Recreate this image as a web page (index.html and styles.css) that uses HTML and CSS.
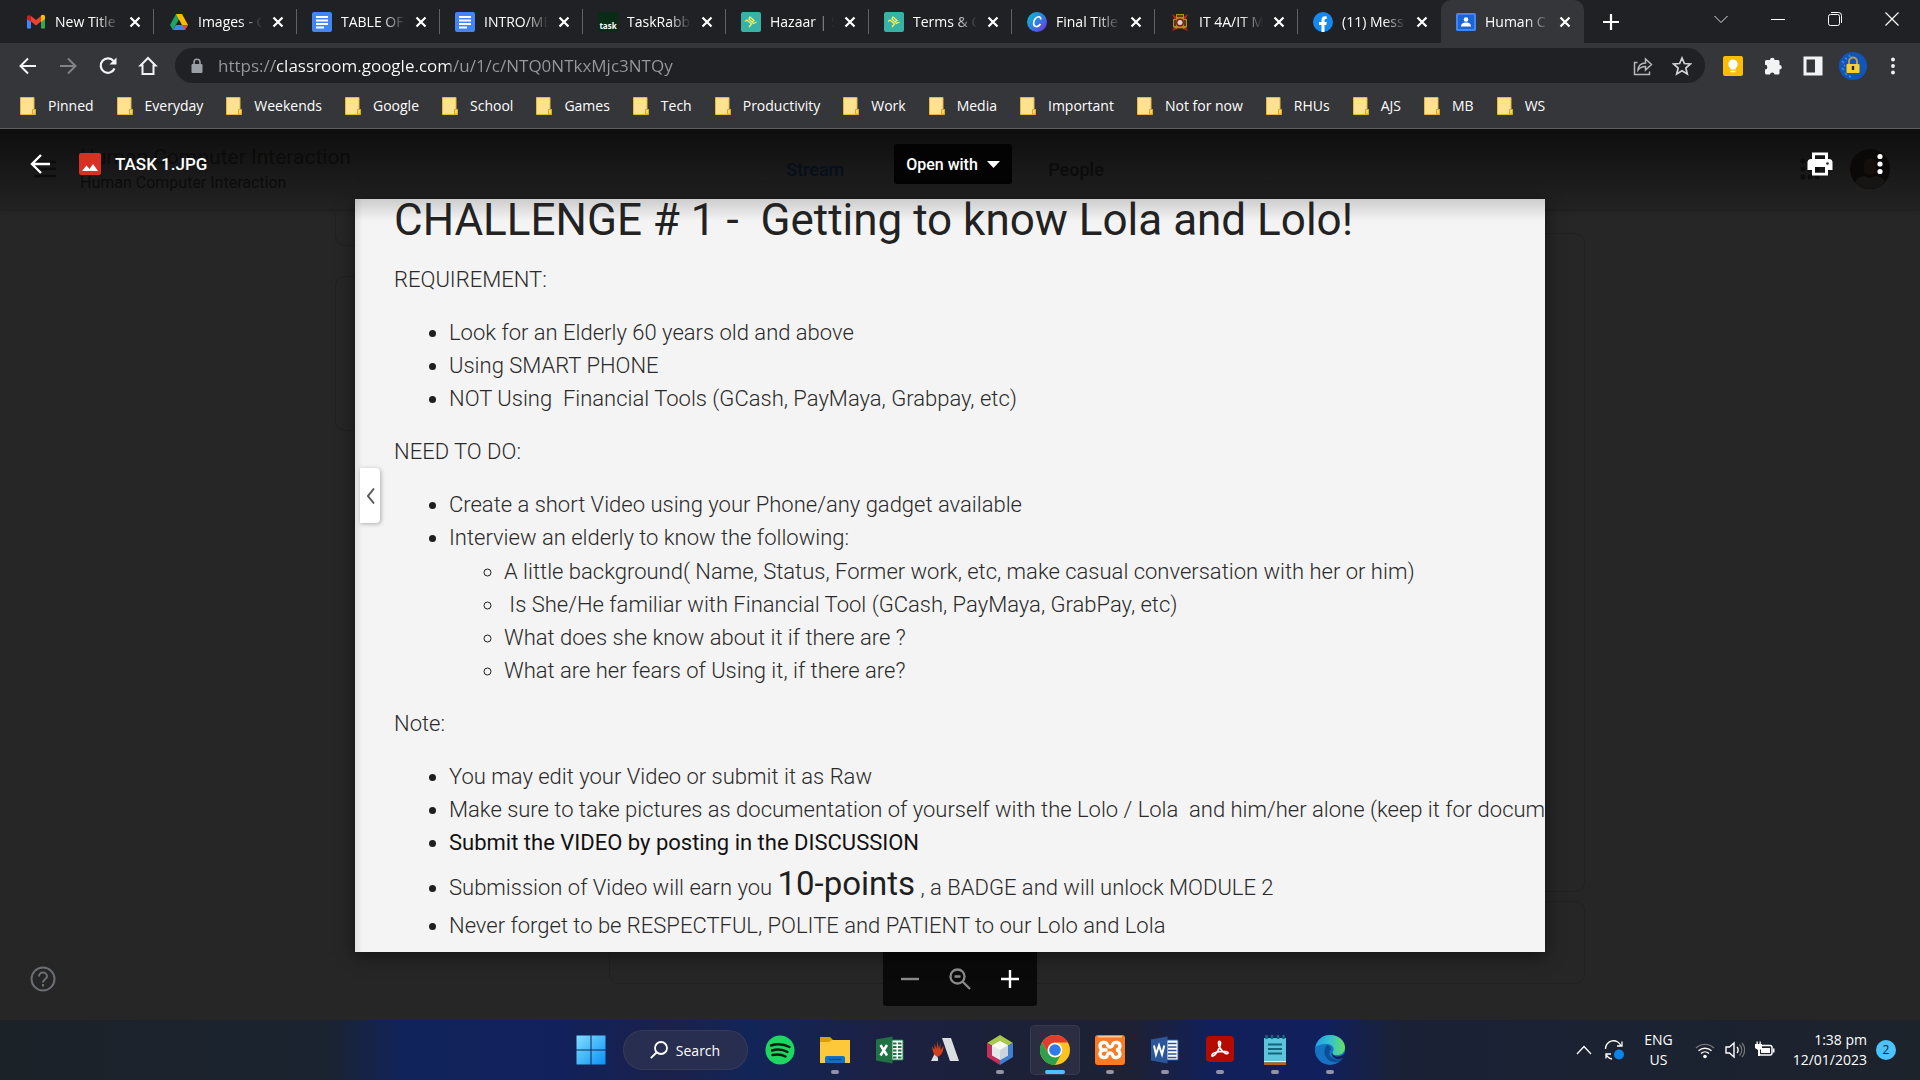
FILE: index.html
```html
<!DOCTYPE html>
<html lang="en">
<head>
<meta charset="utf-8">
<title>Human Computer Interaction</title>
<link rel="stylesheet" href="styles.css">
</head>
<body>
<svg class="sprite" aria-hidden="true">
  <symbol id="close" viewBox="0 0 12 12"><path d="M1.5 1.5l9 9M10.500 1.500l-9 9" stroke="#fff" stroke-width="2.200"/></symbol>
  <symbol id="folder" viewBox="0 0 16 18"><path d="M.5.5h13.500v12h1.500v5H.5z" fill="#ffe290" stroke="#e3b93b"/><path d="M12.500 17v-4.500h3V17z" fill="#fbd765" stroke="#d9a92e"/></symbol>
  <symbol id="docs" viewBox="0 0 20 20"><rect width="20" height="20" rx="2" fill="#4285f4"/><path d="M4 5h12M4 8.500h12M4 12h12M4 15.500h8" stroke="#fff" stroke-width="2"/></symbol>
  <symbol id="hazaar" viewBox="0 0 20 20"><rect width="20" height="20" rx="2" fill="#38b2a5"/><path d="M4 9.500l2-1.500 4.500 4-2.500 3M9 4.500L8 7l4.500 4.500 3-1.500M9 5l4 3.500-2 1.500" fill="none" stroke="#f5f060" stroke-width="1.300"/></symbol>
</svg>

<header class="browser">
  <div class="tabstrip">
    <div class="tabs">
      <div class="tab"><svg class="favicon" viewBox="0 0 20 20"><path d="M1 4v12.500h4V9z" fill="#4285f4"/><path d="M19 4v12.500h-4V9z" fill="#34a853"/><path d="M15 5v5l4-3V5c0-2-2-3-4-1.500z" fill="#fbbc04"/><path d="M5 9.500V4L10 8l5-4v5.500L10 13.500z" fill="#ea4335"/><path d="M1 7l4 3V4C3 2.500 1 3 1 5z" fill="#c5221f"/></svg><a href="#" class="tab-title">New Title</a><button class="tab-close" aria-label="Close tab"><svg><use href="#close"/></svg></button></div>
      <div class="tab"><svg class="favicon" viewBox="0 0 20 20"><path d="M7 2h6L4 18 1 13z" fill="#1ea362"/><path d="M7 2h6l6 11h-6z" fill="#ffba00"/><path d="M7 13h12l-3 5H4z" fill="#4285f4"/><path d="M13 13h6l-3 5z" fill="#ea4335"/></svg><a href="#" class="tab-title">Images - G</a><button class="tab-close" aria-label="Close tab"><svg><use href="#close"/></svg></button></div>
      <div class="tab"><svg class="favicon"><use href="#docs"/></svg><a href="#" class="tab-title">TABLE OF</a><button class="tab-close" aria-label="Close tab"><svg><use href="#close"/></svg></button></div>
      <div class="tab"><svg class="favicon"><use href="#docs"/></svg><a href="#" class="tab-title">INTRO/ME</a><button class="tab-close" aria-label="Close tab"><svg><use href="#close"/></svg></button></div>
      <div class="tab"><span class="favicon task">task</span><a href="#" class="tab-title">TaskRabbit</a><button class="tab-close" aria-label="Close tab"><svg><use href="#close"/></svg></button></div>
      <div class="tab"><svg class="favicon"><use href="#hazaar"/></svg><a href="#" class="tab-title">Hazaar | S</a><button class="tab-close" aria-label="Close tab"><svg><use href="#close"/></svg></button></div>
      <div class="tab"><svg class="favicon"><use href="#hazaar"/></svg><a href="#" class="tab-title">Terms &amp; C</a><button class="tab-close" aria-label="Close tab"><svg><use href="#close"/></svg></button></div>
      <div class="tab"><svg class="favicon" viewBox="0 0 20 20"><defs><linearGradient id="cv" x1="0" y1="0" x2="1" y2="1"><stop offset="0" stop-color="#00c4cc"/><stop offset=".5" stop-color="#2f7fe0"/><stop offset="1" stop-color="#7d2ae8"/></linearGradient></defs><circle cx="10" cy="10" r="10" fill="url(#cv)"/><path d="M13.500 7.500c1-3-3-4-5.500-.5-2 3-2 7 1 7.500 2 .3 3.500-1 4.500-2.500" fill="none" stroke="#fff" stroke-width="1.700"/></svg><a href="#" class="tab-title">Final Title</a><button class="tab-close" aria-label="Close tab"><svg><use href="#close"/></svg></button></div>
      <div class="tab"><svg class="favicon" viewBox="0 0 20 20"><path d="M2 2l5 3h6l5-3-2 5v8l2 4-5-2H7l-5 2 2-4V7z" fill="#b3261e"/><path d="M6 2h8v5h3v8l-4 2H7l-4-2V7h3z" fill="#b98a1e"/><path d="M5 8v6M15 8v6M7 4h6M7 17h6" stroke="#35240c" stroke-width="1.500"/><circle cx="10" cy="10.500" r="4" fill="#7c1d18"/><circle cx="10" cy="10.500" r="2.500" fill="#d9d3cf"/></svg><a href="#" class="tab-title">IT 4A/IT M</a><button class="tab-close" aria-label="Close tab"><svg><use href="#close"/></svg></button></div>
      <div class="tab last"><svg class="favicon" viewBox="0 0 20 20"><circle cx="10" cy="10" r="10" fill="#1489f0"/><path d="M8.500 20v-7H6v-3h2.500V8c0-3 1.700-4 5.200-3.600V7C12 7 11.500 7 11.500 8.500V10h2.300l-.5 3h-1.800v7z" fill="#fff"/></svg><a href="#" class="tab-title">(11) Mess</a><button class="tab-close" aria-label="Close tab"><svg><use href="#close"/></svg></button></div>
      <div class="tab active"><svg class="favicon" viewBox="0 0 20 20"><rect y="1" width="20" height="18" rx="1.500" fill="#4285f4"/><rect x="2" y="3" width="16" height="14" fill="#1a66d6"/><circle cx="10" cy="7.500" r="2.300" fill="#fff"/><path d="M5 14.500c0-3.500 3-4 5-4s5 .5 5 4z" fill="#fff"/></svg><a href="#" class="tab-title">Human C</a><button class="tab-close" aria-label="Close tab"><svg><use href="#close"/></svg></button></div>
    </div>
    <button class="new-tab" aria-label="New tab"><svg width="16" height="16" viewBox="0 0 16 16"><path d="M8 0v16M0 8h16" stroke="#fff" stroke-width="2.200"/></svg></button>
    <div class="window-controls">
      <button aria-label="Search tabs"><svg width="14" height="14" viewBox="0 0 14 14"><path d="M.5 4L7 10.500 13.500 4" fill="none" stroke="#ddd"/></svg></button>
      <button aria-label="Minimize"><svg width="14" height="14" viewBox="0 0 14 14"><path d="M0 7.500h14" stroke="#fff"/></svg></button>
      <button aria-label="Restore"><svg width="14" height="14" viewBox="0 0 14 14"><rect x=".5" y="2.500" width="11" height="11" rx="2" fill="none" stroke="#fff"/><path d="M3 .5h7.500a3 3 0 013 3V11" fill="none" stroke="#fff"/></svg></button>
      <button aria-label="Close"><svg width="14" height="14" viewBox="0 0 14 14"><path d="M.5.5l13 13M13.500.5l-13 13" stroke="#fff" stroke-width="1.200"/></svg></button>
    </div>
  </div>

  <div class="toolbar">
    <div class="nav">
      <button aria-label="Back"><svg viewBox="0 0 20 20"><path d="M18 10H3M10 2.500L2.500 10l7.500 7.500" fill="none" stroke="#f1f3f4" stroke-width="2"/></svg></button>
      <button aria-label="Forward"><svg viewBox="0 0 20 20"><path d="M2 10h15M10 2.500l7.500 7.500-7.500 7.500" fill="none" stroke="#818387" stroke-width="2"/></svg></button>
      <button aria-label="Reload"><svg viewBox="0 0 20 20"><path d="M16.500 12.500A7.200 7.200 0 1115.500 5" fill="none" stroke="#f1f3f4" stroke-width="2.200"/><path d="M18.500 1.500v7h-7z" fill="#f1f3f4"/></svg></button>
      <button aria-label="Home"><svg viewBox="0 0 20 20"><path d="M4.500 18V9.500h-2L10 2l7.500 7.500h-2V18z" fill="none" stroke="#f1f3f4" stroke-width="2"/></svg></button>
    </div>
    <div class="omnibox">
      <svg class="lock" viewBox="0 0 12 16"><path d="M3 7V4.200a3 3 0 016 0V7" fill="none" stroke="#9aa0a6" stroke-width="1.600"/><rect x=".5" y="6" width="11" height="9" rx="1.200" fill="#9aa0a6"/></svg>
      <input class="url" type="text" aria-label="Address" value="https://classroom.google.com/u/1/c/NTQ0NTkxMjc3NTQy">
      <button aria-label="Share"><svg viewBox="0 0 20 20"><path d="M4.500 6.500H1.500v12h15v-3" fill="none" stroke="#b5b7ba" stroke-width="1.500"/><path d="M5 14c.5-5 3.500-7 7.500-7V3l6 5.500-6 5.500v-3.500c-3.500 0-5.500 1-7.500 3.500z" fill="none" stroke="#b5b7ba" stroke-width="1.500"/></svg></button>
      <button aria-label="Bookmark this tab"><svg viewBox="0 0 20 20"><path d="M10 2l2.400 5.500 6 .5-4.600 4 1.500 6L10 14.700 4.700 18l1.500-6-4.600-4 6-.5z" fill="none" stroke="#d0d2d5" stroke-width="1.700"/></svg></button>
    </div>
    <div class="extensions">
      <button aria-label="Google Keep"><svg viewBox="0 0 20 20"><rect width="20" height="20" rx="2" fill="#fbbc04"/><path d="M10 3.500a4.700 4.700 0 00-2.700 8.500v1.500h5.400V12A4.700 4.700 0 0010 3.500zM7.500 14.700h5v1.500h-5z" fill="#fff"/></svg></button>
      <button aria-label="Extensions"><svg viewBox="0 0 20 20"><path d="M7 4a2.300 2.300 0 014.600 0H15a1.500 1.500 0 011.500 1.500V9a2.300 2.300 0 010 4.600V17a1.500 1.500 0 01-1.500 1.500h-3.400a2.400 2.400 0 00-4.700 0H3.500A1.500 1.500 0 012 17v-3.500a2.300 2.300 0 000-4.700V5.500A1.500 1.500 0 013.500 4z" fill="#f1f3f4"/></svg></button>
      <button aria-label="Side panel"><svg viewBox="0 0 20 20"><rect x="2" y="2" width="16" height="16" fill="none" stroke="#f1f3f4" stroke-width="3"/><path d="M12 2h7v16h-7z" fill="#f1f3f4"/></svg></button>
      <button aria-label="Profile"><svg class="profile" viewBox="0 0 28 28"><circle cx="14" cy="14" r="14" fill="#1255b8"/><path d="M3 9l2 2M6 6l2 1M3 16l2 2M6 21l2 2M10 3l1 2M5 13l1 1M10 24l2 1" stroke="#3d8ae8" stroke-width="1.500"/><path d="M10 13V9.500a4 4 0 018 0V13" fill="none" stroke="#b99b4a" stroke-width="2"/><rect x="7.500" y="12" width="13" height="9" rx="1" fill="#f8cf2e"/><path d="M14 14v4" stroke="#1d2a44" stroke-width="2.400"/></svg></button>
      <button aria-label="Menu"><svg viewBox="0 0 20 20"><g fill="#f1f3f4"><circle cx="10" cy="3.500" r="1.900"/><circle cx="10" cy="10" r="1.900"/><circle cx="10" cy="16.500" r="1.900"/></g></svg></button>
    </div>
  </div>

  <nav class="bookmarks" aria-label="Bookmarks">
    <a href="#"><svg><use href="#folder"/></svg>Pinned</a>
    <a href="#"><svg><use href="#folder"/></svg>Everyday</a>
    <a href="#"><svg><use href="#folder"/></svg>Weekends</a>
    <a href="#"><svg><use href="#folder"/></svg>Google</a>
    <a href="#"><svg><use href="#folder"/></svg>School</a>
    <a href="#"><svg><use href="#folder"/></svg>Games</a>
    <a href="#"><svg><use href="#folder"/></svg>Tech</a>
    <a href="#"><svg><use href="#folder"/></svg>Productivity</a>
    <a href="#"><svg><use href="#folder"/></svg>Work</a>
    <a href="#"><svg><use href="#folder"/></svg>Media</a>
    <a href="#"><svg><use href="#folder"/></svg>Important</a>
    <a href="#"><svg><use href="#folder"/></svg>Not for now</a>
    <a href="#"><svg><use href="#folder"/></svg>RHUs</a>
    <a href="#"><svg><use href="#folder"/></svg>AJS</a>
    <a href="#"><svg><use href="#folder"/></svg>MB</a>
    <a href="#"><svg><use href="#folder"/></svg>WS</a>
  </nav>
</header>

<div class="stage">
  <div class="classroom" aria-hidden="true">
    <div class="class-header">
      <div class="class-brand">
        <svg class="hamburger" viewBox="0 0 22 18"><path d="M0 2h22M0 9h22M0 16h22" stroke="#0c0c0c" stroke-width="2.500"/></svg>
        <div class="class-name"><strong>Human Computer Interaction</strong><span>Human Computer Interaction</span></div>
      </div>
      <div class="class-nav"><span class="current">Stream</span><span>Classwork</span><span>People</span></div>
      <div class="class-tools">
        <svg width="20" height="24" viewBox="0 0 20 24"><g fill="#0c0c0c"><circle cx="3" cy="4" r="2.500"/><circle cx="10" cy="4" r="2.500"/><circle cx="17" cy="4" r="2.500"/><circle cx="3" cy="12" r="2.500"/><circle cx="10" cy="12" r="2.500"/><circle cx="17" cy="12" r="2.500"/><circle cx="3" cy="20" r="2.500"/><circle cx="10" cy="20" r="2.500"/><circle cx="17" cy="20" r="2.500"/></g></svg>
        <svg width="40" height="40" viewBox="0 0 40 40"><circle cx="20" cy="20" r="20" fill="#0b0908"/><path d="M14 14c0-6 12-6 12 0v8c0 5-12 5-12 0z" fill="#150f0c"/><path d="M5 33c4-6 8-7 15-4 7-3 11-2 15 4a20 20 0 01-30 0z" fill="#171514"/></svg>
      </div>
    </div>
    <div class="class-body">
      <div class="side"><div class="card code"></div><div class="card upcoming"></div></div>
      <div class="feed"><div class="card post"></div><div class="card comment"></div></div>
    </div>
  </div>

  <div class="viewer">
    <div class="viewer-bar">
      <div class="file">
        <button aria-label="Close viewer"><svg width="20" height="20" viewBox="0 0 20 20"><path d="M20 10H2M11 1l-9 9 9 9" fill="none" stroke="#fff" stroke-width="2.400"/></svg></button>
        <svg width="22" height="22" viewBox="0 0 22 22"><rect width="22" height="22" rx="2" fill="#d93025"/><path d="M3 18l4.500-5.500 3 3.500 3.500-5 5 7z" fill="#fff"/></svg>
        <span class="file-name">TASK 1.JPG</span>
      </div>
      <button class="open-with">Open with<svg width="13" height="7" viewBox="0 0 13 7"><path d="M0 0h13L6.500 7z" fill="#fff"/></svg></button>
      <div class="actions">
        <button aria-label="Print"><svg width="26" height="24" viewBox="0 0 26 24"><path d="M5 .5h16V7h1a3.500 3.500 0 013.500 3.500V18H21v5.500H5V18H.5v-7.500A3.500 3.500 0 014 7h1zm3 2.700V7h10V3.200zM8 15v5.700h10V15z" fill="#fff" fill-rule="evenodd"/><circle cx="20.500" cy="11.500" r="1.300" fill="#222"/></svg></button>
        <button aria-label="More actions"><svg width="6" height="22" viewBox="0 0 6 22"><g fill="#fff"><circle cx="3" cy="3.500" r="2.600"/><circle cx="3" cy="11" r="2.600"/><circle cx="3" cy="18.500" r="2.600"/></g></svg></button>
      </div>
    </div>

    <main class="sheet-area">
      <article class="sheet">
        <button class="expander" aria-label="Collapse panel"><svg width="9" height="18" viewBox="0 0 9 18"><path d="M8 1.500L2 9l6 7.500" fill="none" stroke="#555" stroke-width="2"/></svg></button>
        <h1>CHALLENGE # 1 -&nbsp; Getting to know Lola and Lolo!</h1>
        <p>REQUIREMENT:</p>
        <ul>
          <li>Look for an Elderly 60 years old and above</li>
          <li>Using SMART PHONE</li>
          <li>NOT Using&nbsp; Financial Tools (GCash, PayMaya, Grabpay, etc)</li>
        </ul>
        <p>NEED TO DO:</p>
        <ul>
          <li>Create a short Video using your Phone/any gadget available</li>
          <li>Interview an elderly to know the following:
            <ul>
              <li>A little background( Name, Status, Former work, etc, make casual conversation with her or him)</li>
              <li>&nbsp;Is She/He familiar with Financial Tool (GCash, PayMaya, GrabPay, etc)</li>
              <li>What does she know about it if there are ?</li>
              <li>What are her fears of Using it, if there are?</li>
            </ul>
          </li>
        </ul>
        <p>Note:</p>
        <ul>
          <li>You may edit your Video or submit it as Raw</li>
          <li>Make sure to take pictures as documentation of yourself with the Lolo / Lola&nbsp; and him/her alone (keep it for documentation)</li>
          <li><strong>Submit the VIDEO by posting in the DISCUSSION</strong></li>
          <li>Submission of Video will earn you <span class="points">10-points</span> , a BADGE and will unlock MODULE 2</li>
          <li>Never forget to be RESPECTFUL, POLITE and PATIENT to our Lolo and Lola</li>
        </ul>
      </article>
    </main>

    <div class="viewer-foot">
      <button class="help" aria-label="Help"><svg width="26" height="26" viewBox="0 0 26 26"><circle cx="13" cy="13" r="11.500" fill="none" stroke="#6b6f74" stroke-width="2"/><path d="M9 10.500a4 4 0 118 0c0 2.500-4 3-4 6M13 18v2.400" fill="none" stroke="#6b6f74" stroke-width="2"/></svg></button>
      <div class="zoom">
        <button aria-label="Zoom out"><svg width="18" height="18" viewBox="0 0 18 18"><path d="M0 9h18" stroke="#8a8a8a" stroke-width="2.400"/></svg></button>
        <button aria-label="Fit to width"><svg width="22" height="22" viewBox="0 0 22 22"><circle cx="8.500" cy="8.500" r="7" fill="none" stroke="#8a8a8a" stroke-width="2.300"/><path d="M5.500 8.500h6M13.500 13.500l7.500 7.500" stroke="#8a8a8a" stroke-width="2.300"/></svg></button>
        <button aria-label="Zoom in"><svg width="18" height="18" viewBox="0 0 18 18"><path d="M0 9h18M9 0v18" stroke="#fff" stroke-width="2.400"/></svg></button>
      </div>
    </div>
  </div>
</div>

<footer class="taskbar">
  <div class="dock">
    <button class="app" aria-label="Start"><svg viewBox="0 0 30 30"><defs><linearGradient id="win" x1="0" y1="0" x2="1" y2="1"><stop offset="0" stop-color="#7fe0ff"/><stop offset="1" stop-color="#0a90f5"/></linearGradient></defs><path d="M.5.500h14v14H.5zM15.500.500h14v14h-14zM.5 15.500h14v14H.5zM15.500 15.500h14v14h-14z" fill="url(#win)"/></svg></button>
    <button class="search"><svg width="18" height="18" viewBox="0 0 18 18"><circle cx="11" cy="7" r="6" fill="none" stroke="#fff" stroke-width="1.800"/><path d="M6.500 11.500L.8 17.200" stroke="#fff" stroke-width="1.800"/></svg>Search</button>
    <button class="app" aria-label="Spotify"><svg viewBox="0 0 30 30"><circle cx="15" cy="15" r="14.500" fill="#1ed760"/><path d="M6 10.500c6-2 13-1.500 18.500 1.500M7 15.500c5-1.500 11-1 15.500 1.500M7.500 20c4.500-1 9-.7 13 1.500" fill="none" stroke="#0c1a10" stroke-width="2.400" stroke-linecap="round"/></svg></button>
    <button class="app open" aria-label="File Explorer"><svg viewBox="0 0 30 30"><path d="M0 2h10l3 3v5H0z" fill="#e09d0a"/><path d="M0 7h9l3-2h18v23H0z" fill="#fdc93a"/><path d="M5 28v-5a2 2 0 012-2h16a2 2 0 012 2v5z" fill="#1071c6"/><path d="M9 24.500h12" stroke="#0a4d90" stroke-width="1.500"/></svg></button>
    <button class="app" aria-label="Excel"><svg viewBox="0 0 30 30"><path d="M15 5h13v20H15z" fill="#fff" stroke="#217346"/><path d="M18 8.500h3.500M18 12h3.500M18 15.500h3.500M18 19h3.500M18 22.500h3.500M23 8.500h3.500M23 12h3.500M23 15.500h3.500M23 19h3.500M23 22.500h3.500" stroke="#217346" stroke-width="2"/><path d="M1 4.500L17.500 1.500v27L1 25.500z" fill="#207245"/><path d="M5.500 10l6.500 10.500M12 10L5.500 20.500" stroke="#fff" stroke-width="2.500"/></svg></button>
    <button class="app" aria-label="MTG Arena"><svg viewBox="0 0 30 30"><path d="M12 3h9l8 23h-9z" fill="#dcdfe0"/><path d="M1 26l4-8 3 5 0 3z" fill="#dcdfe0"/><path d="M7.500 22C3 20 2.500 15 2 11l2.500 4V8.500L6.500 14 7.500 6l1.300 8L10.500 8v7l3-4c0 4-1 9-6 11z" fill="#d0401c"/></svg></button>
    <button class="app open" aria-label="NetBeans"><svg viewBox="0 0 30 30"><path d="M15 0l13 8-13 7L2 8z" fill="#a9c84b"/><path d="M2 8l13 7v15L2 22z" fill="#c0305a"/><path d="M28 8l-13 7v15l13-8z" fill="#3f7fd0"/><path d="M15 6l8 4.500v10L15 25l-8-4.500v-10z" fill="#e4e9ec"/><path d="M15 6l8 4.500-8 4.500-8-4.500z" fill="#f7faef"/><path d="M15 15l8-4.500v10L15 25z" fill="#cdd5dc"/></svg></button>
    <button class="app open current" aria-label="Chrome"><svg viewBox="0 0 30 30"><circle cx="15" cy="15" r="15" fill="#fcc31e"/><path d="M2 7.500a15 15 0 0126 0H15a7.500 7.500 0 00-6.500 11.200z" fill="#e33b2e"/><path d="M2 7.500A15 15 0 0015 30l6.500-11.300a7.500 7.500 0 01-13 0z" fill="#2da04e"/><circle cx="15" cy="15" r="7.300" fill="#fff"/><circle cx="15" cy="15" r="5.800" fill="#2f7be8"/></svg></button>
    <button class="app open" aria-label="XAMPP"><svg viewBox="0 0 30 30"><rect width="30" height="30" rx="3" fill="#fb7a24"/><path d="M3 1h24v1.500H3z" fill="#ffc79c"/><path d="M12.500 15H9a3.800 3.800 0 113.500-5c.5 1.500 1 2 2.500 2s2-.5 2.500-2A3.800 3.800 0 1121 15a3.800 3.800 0 11-3.500 5c-.5-1.500-1-2-2.500-2s-2 .5-2.500 2A3.800 3.800 0 119 15" fill="none" stroke="#fff" stroke-width="3.400"/></svg></button>
    <button class="app open" aria-label="Word"><svg viewBox="0 0 30 30"><path d="M15 5h13v20H15z" fill="#fff" stroke="#2b579a"/><path d="M18 8.500h8.500M18 12h8.500M18 15.500h8.500M18 19h8.500M18 22.500h8.500" stroke="#2b579a" stroke-width="1.500"/><path d="M1 4.500L17.500 1.500v27L1 25.500z" fill="#2b579a"/><path d="M4 10.500l2 9 3-9 3 9 2.300-9" fill="none" stroke="#fff" stroke-width="2"/></svg></button>
    <button class="app open" aria-label="Acrobat"><svg viewBox="0 0 30 30"><rect x="1" y="1" width="28" height="26" rx="4" fill="#b30b00"/><path d="M7 21c-1-3 6-5 13-4.500 5 .5 3 3 .5 2C17 17 13 11 13.500 7.500c.3-2 2.500-1 2 1.500-.6 4-5.500 13-8.500 12z" fill="none" stroke="#fff" stroke-width="1.700"/></svg></button>
    <button class="app open" aria-label="Notepad"><svg viewBox="0 0 30 30"><path d="M4 3h22v24H4z" fill="#5cc5dc"/><path d="M4 26h22v1.500H4z" fill="#eef"/><path d="M4 27.500h22V30H4z" fill="#b0651c"/><path d="M6.500 0v4M12 0v4M18 0v4M23.500 0v4" stroke="#0f6780" stroke-width="2.400"/><path d="M8 9.500h14M8 14h14M8 18.500h14" stroke="#11667c" stroke-width="2"/></svg></button>
    <button class="app open" aria-label="Edge"><svg viewBox="0 0 30 30"><defs><linearGradient id="edge"><stop offset="0" stop-color="#1f9fe8"/><stop offset=".5" stop-color="#35c1d0"/><stop offset="1" stop-color="#66e060"/></linearGradient></defs><circle cx="15" cy="15" r="15" fill="#1573c4"/><path d="M.2 13C2 4 8 0 15 0c9 0 15 6 15 12.500 0 5-4 7.500-8 7.500-4.500 0-5.500-1.500-4-3.500 2-3.500-1-7.500-6-7.500C7 9 2 10 .2 13z" fill="url(#edge)"/><path d="M12 10c-5 5-3 15 6 17 4 .8 8-1 10-4-4 2-9 2-12-1-3-3-1-6 0-8 0-2-2-4-4-4z" fill="#0d4f96"/><path d="M17.500 17c-1 2 1 4.500 5 4.500 3 0 6-1.500 7-3.500l1 1-2.500 4c-4 2-8 1-10-1-1.500-2-1.500-3.500-.5-5z" fill="#11205c"/></svg></button>
  </div>
  <div class="tray">
    <button aria-label="Hidden icons"><svg width="16" height="10" viewBox="0 0 16 10"><path d="M1 9l7-7.500L15 9" fill="none" stroke="#fff" stroke-width="1.300"/></svg></button>
    <svg class="sync" viewBox="0 0 20 20"><path d="M1.500 9A8 8 0 0117 6M18 1.500V6h-5M2 18.500V14h5M2 14a8 8 0 006 5" fill="none" stroke="#fff" stroke-width="1.300"/><circle cx="15" cy="14.500" r="5" fill="#0a84e8"/></svg>
    <button class="lang">ENG<br>US</button>
    <div class="status">
      <svg width="20" height="20" viewBox="0 0 20 20"><path d="M1 8a13 13 0 0118 0" fill="none" stroke="#777" stroke-width="1.400"/><path d="M3.500 10.800a9.500 9.500 0 0113 0M6 13.400a6 6 0 018 0" fill="none" stroke="#fff" stroke-width="1.400"/><circle cx="10" cy="16.500" r="1.800" fill="#fff"/></svg>
      <svg width="20" height="20" viewBox="0 0 20 20"><path d="M1 7h3.500L9 3v14l-4.500-4H1z" fill="none" stroke="#fff" stroke-width="1.400"/><path d="M12 7c1.500 1.500 1.500 4.500 0 6" fill="none" stroke="#fff" stroke-width="1.400"/><path d="M14.500 4.500c3 3 3 8 0 11M17 3c3.500 4 3.500 10 0 14" fill="none" stroke="#777" stroke-width="1.200"/></svg>
      <svg width="20" height="20" viewBox="0 0 20 20"><rect x="4" y="5.500" width="13" height="9.500" rx="2" fill="none" stroke="#fff" stroke-width="1.500"/><path d="M6 8h9v5H6zM18 8.500h1.500v4H18zM0 4h7v4l-2 2v6H3v-6L0 8zM1.500 1.500h1.300V4H1.500zM4.500 1.500h1.300V4H4.500z" fill="#fff"/></svg>
    </div>
    <button class="clock">1:38 pm<br>12/01/2023</button>
    <span class="badge">2</span>
  </div>
</footer>
</body>
</html>
```
FILE: styles.css
```css
* { box-sizing: border-box; }

body {
  margin: 0;
  min-height: 100vh;
  display: flex;
  flex-direction: column;
  overflow-x: hidden;
  background: #262626;
  color: #fff;
  font-family: "Open Sans", "Noto Sans", sans-serif;
  font-size: 14px;
}

button {
  display: inline-flex;
  align-items: center;
  justify-content: center;
  padding: 0;
  border: 0;
  background: none;
  color: inherit;
  font: inherit;
  cursor: pointer;
}

a { color: inherit; text-decoration: none; }
svg { flex: none; display: block; }
.sprite { position: absolute; width: 0; height: 0; }

/* Browser chrome */
.browser { background: #35363a; border-bottom: 1px solid #5c5d60; }

.tabstrip {
  display: flex;
  align-items: center;
  height: 43px;
  padding-left: 11px;
  background: #202124;
}

.tabs { display: flex; align-self: stretch; flex: 0 1 1573px; min-width: 0; }

.tab {
  position: relative;
  flex: 1 1 0;
  min-width: 0;
  display: flex;
  align-items: center;
  padding: 0 9px 0 15px;
}

.tab::after {
  content: "";
  position: absolute;
  right: 0;
  top: 9px;
  width: 1px;
  height: 25px;
  background: #5f6165;
}

.tab.last::after, .tab.active::after { display: none; }
.tab.active { background: #35363a; border-radius: 10px 10px 0 0; }

.favicon { width: 20px; height: 20px; flex: none; }

.task {
  display: flex;
  align-items: flex-end;
  justify-content: center;
  background: #0a2b16;
  font-size: 8px;
  font-weight: 700;
  line-height: 12px;
}

.tab-title {
  flex: 1;
  min-width: 0;
  margin: 0 6px 0 9px;
  overflow: hidden;
  white-space: nowrap;
  -webkit-mask-image: linear-gradient(90deg, #000 65%, transparent);
  mask-image: linear-gradient(90deg, #000 65%, transparent);
}

.tab-close { width: 20px; height: 20px; }
.tab-close svg { width: 12px; height: 12px; }
.new-tab { width: 32px; height: 32px; margin-left: 11px; }
.window-controls { display: flex; align-self: stretch; margin-left: auto; padding-bottom: 6px; }
.window-controls button { width: 57px; }

.toolbar { display: flex; align-items: center; height: 45px; padding-left: 8px; }
.nav { display: flex; }
.nav button { width: 40px; height: 40px; }
.nav svg, .omnibox button svg, .extensions svg { width: 20px; height: 20px; }

.omnibox {
  display: flex;
  align-items: center;
  flex: 1;
  height: 35px;
  margin: 0 8px 0 7px;
  padding: 0 4px 0 16px;
  border-radius: 18px;
  background: #202124;
}

.lock { width: 12px; height: 16px; }

.url {
  flex: 1;
  min-width: 0;
  margin-left: 15px;
  padding: 0;
  border: 0;
  outline: 0;
  font: 17px/24px "Open Sans", "Noto Sans", sans-serif;
  color: transparent;
  background: linear-gradient(90deg, #96999d 57px, #fff 57px 232px, #96999d 232px);
  -webkit-background-clip: text;
  background-clip: text;
}

.omnibox button { width: 39px; height: 35px; }
.extensions { display: flex; padding-right: 7px; }
.extensions button { width: 40px; height: 40px; }
.extensions .profile { width: 28px; height: 28px; }

.bookmarks {
  display: flex;
  align-items: center;
  gap: 23px;
  height: 40px;
  padding: 0 20px 5px;
  overflow: hidden;
  white-space: nowrap;
}

.bookmarks a { display: flex; align-items: center; gap: 12px; }
.bookmarks svg { width: 16px; height: 18px; }

/* Page under the viewer, dimmed */
.stage { position: relative; flex: 1; display: flex; flex-direction: column; }

.classroom {
  position: absolute;
  inset: 0;
  overflow: hidden;
  display: flex;
  flex-direction: column;
  background: #262626;
  font-family: Roboto, sans-serif;
}

.class-header {
  display: grid;
  grid-template-columns: 1fr auto 1fr;
  align-items: center;
  height: 80px;
  padding: 0 30px 0 34px;
  background: linear-gradient(#0e0e0e, #222);
  box-shadow: 0 1px 4px #1a1a1a;
  color: #0b0b0b;
}

.class-brand { display: flex; align-items: center; gap: 24px; }
.hamburger { width: 22px; height: 18px; }
.class-name { display: flex; flex-direction: column; }
.class-name strong { font-size: 21px; line-height: 28px; font-weight: 400; }
.class-name span { font-size: 16px; line-height: 24px; }
.class-nav { display: flex; gap: 60px; padding-right: 34px; font-size: 18px; font-weight: 500; }
.class-nav .current { color: #060e1c; }
.class-tools { display: flex; align-items: center; justify-content: flex-end; gap: 30px; }

.class-body {
  flex: 1;
  display: grid;
  grid-template-columns: 250px 1fr;
  gap: 24px;
  width: 100%;
  max-width: 1250px;
  margin: 0 auto;
}

.side, .feed { display: flex; flex-direction: column; }
.card { border: 1px solid #212121; border-radius: 10px; }
.code { height: 37px; border-top: 0; border-radius: 0 0 10px 10px; margin-bottom: 30px; }
.upcoming { height: 155px; }
.feed { padding: 24px 0 36px; }
.post { flex: 1; margin-bottom: 9px; }
.comment { height: 83px; }

/* File viewer */
.viewer { position: relative; flex: 1; display: flex; flex-direction: column; }

.viewer-bar {
  display: grid;
  grid-template-columns: 1fr auto 1fr;
  align-items: center;
  height: 70px;
  padding: 0 37px 0 23px;
  font-family: Roboto, sans-serif;
  font-size: 17px;
  font-weight: 500;
}

.file { display: flex; align-items: center; padding-left: 7px; }
.file button { margin-right: 29px; }
.file-name { margin-left: 14px; }

.open-with {
  gap: 9px;
  height: 40px;
  padding: 0 12px;
  border-radius: 3px;
  background: #030303;
  font-size: 16px;
}

.actions { display: flex; align-items: center; justify-content: flex-end; gap: 44px; }

.sheet-area { padding-right: 20px; }

.sheet {
  position: relative;
  max-width: 1190px;
  margin: 0 auto;
  padding: 0 0 10px 39px;
  overflow: hidden;
  white-space: nowrap;
  background:
    linear-gradient(rgba(0, 0, 0, 0.16), transparent) 0 0 / 100% 22px no-repeat,
    linear-gradient(90deg, #e2e2e2, #f4f4f4) 0 0 / 8px 100% no-repeat,
    #f4f4f4;
  box-shadow: 0 4px 16px rgba(0, 0, 0, 0.5);
  color: #2a2a2a;
  font-family: Roboto, sans-serif;
  font-size: 22px;
  font-weight: 300;
  line-height: 33px;
}

.sheet h1 { margin: 0 0 22px; font-size: 44px; font-weight: 400; line-height: 42px; color: #222; }
.sheet p { margin: 0 0 20px; }
.sheet ul { margin: 0 0 20px; padding-left: 55px; }
.sheet li::marker { color: #1f1f1f; }
.sheet ul ul { margin: 1px 0; }
.sheet > ul:last-child { margin-bottom: 0; }
.sheet strong { font-weight: 400; color: #111; }
.points { font-size: 33px; font-weight: 400; line-height: 50px; color: #1f1f1f; }

.expander {
  position: absolute;
  left: 5px;
  top: 269px;
  width: 20px;
  height: 55px;
  border-radius: 0 4px 4px 0;
  background: #fff;
  box-shadow: 1px 1px 4px rgba(0, 0, 0, 0.3);
}

.viewer-foot {
  display: grid;
  grid-template-columns: 1fr auto 1fr;
  align-items: center;
  margin-top: auto;
  padding: 0 30px 14px;
}

.help { justify-self: start; }
.zoom { display: flex; border-radius: 0 0 3px 3px; background: #0a0a0a; padding: 0 2px; }
.zoom button { width: 50px; height: 54px; }

/* Taskbar */
.taskbar {
  display: grid;
  grid-template-columns: 1fr auto 1fr;
  align-items: center;
  height: 60px;
  background: linear-gradient(90deg, #1b2228 0%, #1b2330 17%, #11235b 21%, #11215c 29%, #1b214a 35%, #122558 39%, #1c2144 46%, #1b2138 52%, #1e2133 59%, #11205a 63%, #11205c 69%, #1a2136 73%, #1c232b 100%);
}

.dock { grid-column: 2; display: flex; align-items: center; gap: 5px; }

.app { position: relative; width: 50px; height: 50px; border-radius: 5px; }
.app svg { width: 30px; height: 30px; }

.app.open::after {
  content: "";
  position: absolute;
  bottom: 1px;
  width: 8px;
  height: 4px;
  border-radius: 2px;
  background: #9294a6;
}

.app.current { background: #2b2e42; box-shadow: inset 0 0 0 1px #373a4c; }
.app.current::after { width: 20px; background: #4cc2ff; }

.search {
  gap: 8px;
  width: 125px;
  height: 40px;
  margin: 0 2px;
  border-radius: 20px;
  background: #282e50;
  box-shadow: inset 0 0 0 1px #343959;
}

.tray { grid-column: 3; display: flex; align-items: center; justify-content: flex-end; padding-right: 24px; line-height: 20px; }
.sync { width: 20px; height: 20px; margin: 0 20px 0 12px; }
.lang { margin-right: 22px; }
.status { display: flex; gap: 10px; margin-right: 18px; }
.clock { text-align: right; margin-right: 9px; }
.badge { width: 20px; height: 20px; border-radius: 50%; background: #4cc2ff; color: #10222c; font-size: 12px; text-align: center; }
```
